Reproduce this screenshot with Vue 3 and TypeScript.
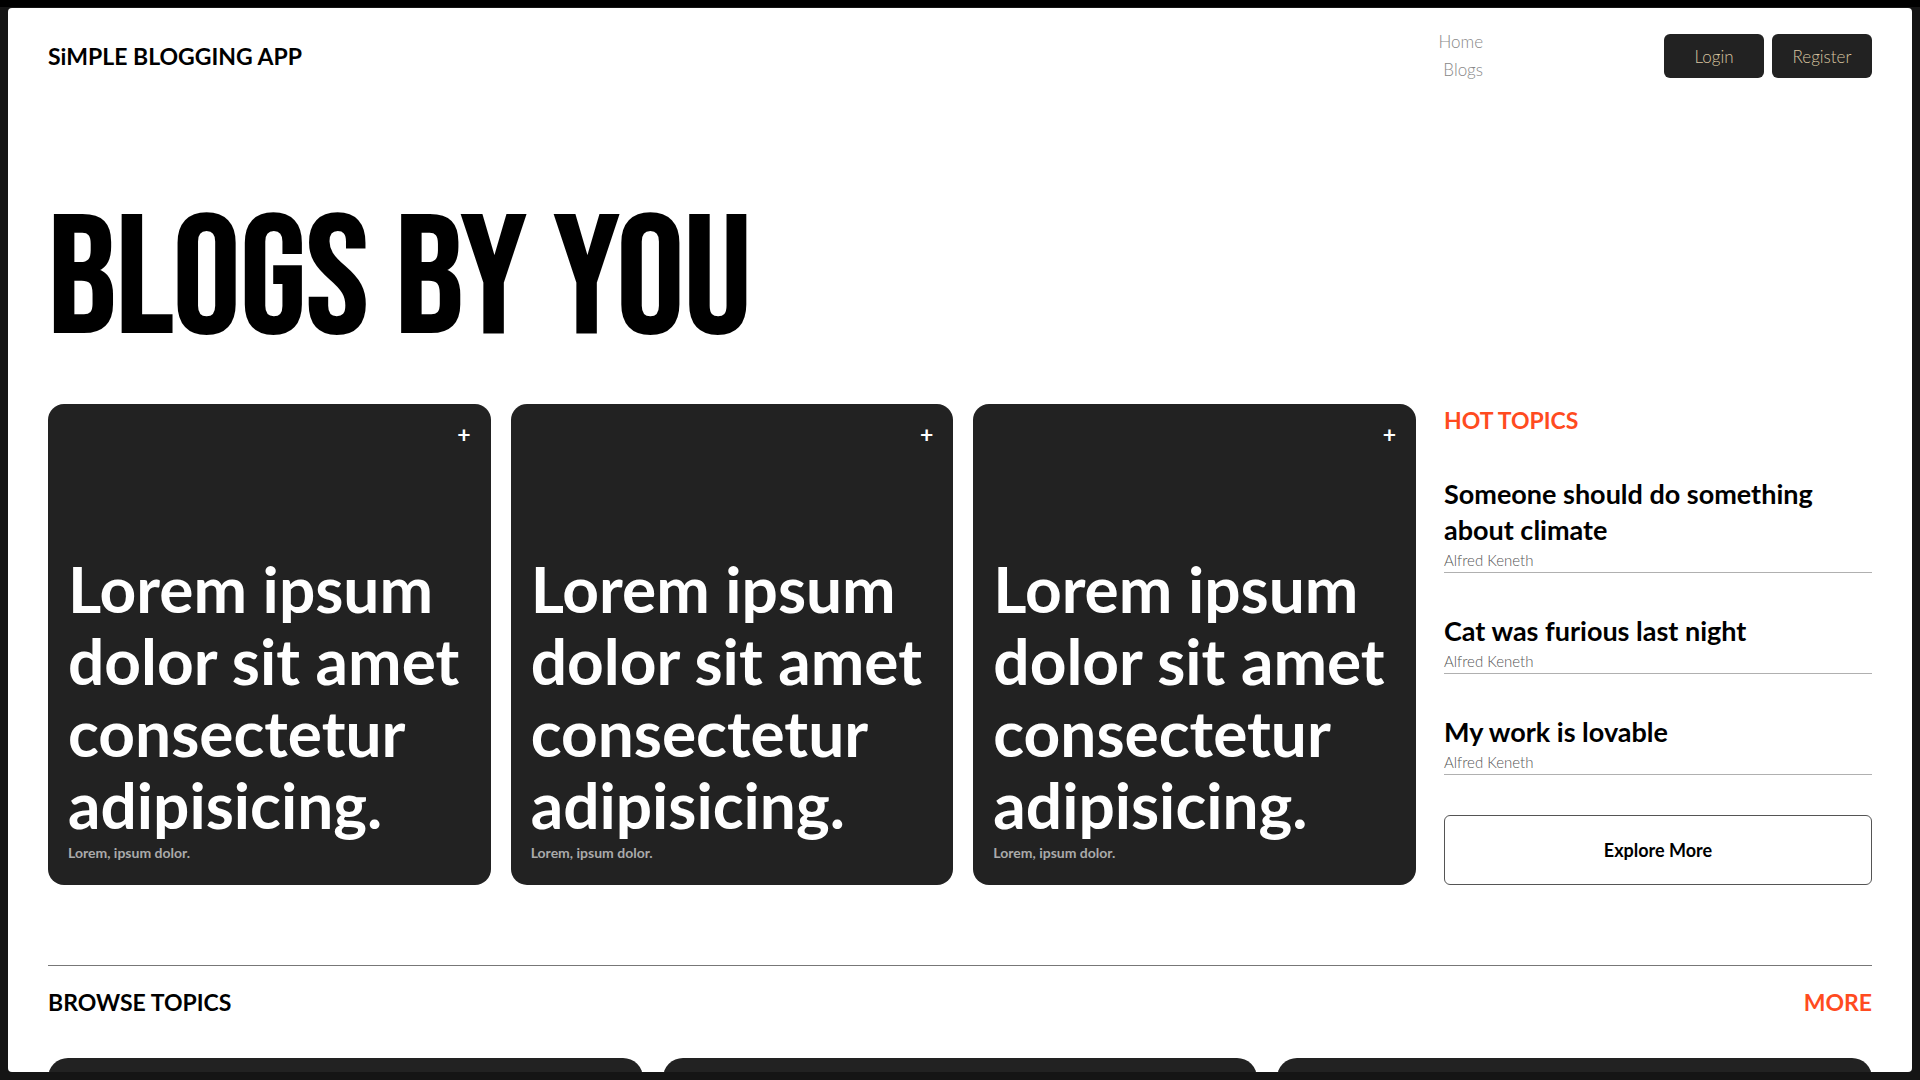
<script setup lang="ts">
interface Post {
  id: number
  title: string
  caption: string
}

interface Topic {
  title: string
  author: string
}

const posts: Post[] = [1, 2, 3].map((id) => ({
  id,
  title: 'Lorem ipsum dolor sit amet consectetur adipisicing.',
  caption: 'Lorem, ipsum dolor.',
}))

const hotTopics: Topic[] = [
  { title: 'Someone should do something about climate', author: 'Alfred Keneth' },
  { title: 'Cat was furious last night', author: 'Alfred Keneth' },
  { title: 'My work is lovable', author: 'Alfred Keneth' },
]
</script>

<template>
  <div class="page">
    <div class="frame">
      <header class="header">
        <a class="brand" href="#">SiMPLE BLOGGING APP</a>
        <nav class="nav">
          <a href="#">Home</a>
          <a href="#">Blogs</a>
        </nav>
        <div class="account">
          <button type="button">Login</button>
          <button type="button">Register</button>
        </div>
      </header>

      <main>
        <h1 class="hero">BLOGS BY YOU</h1>

        <div class="featured">
          <section class="posts">
            <article v-for="post in posts" :key="post.id" class="post">
              <button type="button" class="add">+</button>
              <h2>{{ post.title }}</h2>
              <p>{{ post.caption }}</p>
            </article>
          </section>

          <aside class="hot">
            <h2 class="label accent">HOT TOPICS</h2>
            <article v-for="topic in hotTopics" :key="topic.title" class="topic">
              <h3>{{ topic.title }}</h3>
              <p>{{ topic.author }}</p>
            </article>
            <button type="button" class="explore">Explore More</button>
          </aside>
        </div>

        <section class="browse">
          <div class="browse-head">
            <h2 class="label">BROWSE TOPICS</h2>
            <a class="label accent" href="#">MORE</a>
          </div>
          <div class="browse-grid">
            <div v-for="n in 3" :key="n" class="tile"></div>
          </div>
        </section>
      </main>
    </div>
  </div>
</template>

<style>
body {
  margin: 0;
  background: #151515;
}
</style>

<style scoped>
* {
  box-sizing: border-box;
}

h1,
h2,
h3,
p {
  margin: 0;
}

a {
  color: inherit;
  text-decoration: none;
}

button {
  margin: 0;
  padding: 0;
  border: 0;
  font-family: inherit;
  cursor: pointer;
}

.page {
  height: 100vh;
  padding: 1px 8px 8px;
  border-top: 7px solid #000;
}

.frame {
  height: 100%;
  padding: 20px 40px;
  overflow-y: auto;
  scrollbar-width: none;
  border-radius: 4px;
  background: #fff;
  color: #000;
  font-family: Lato, "Open Sans", sans-serif;
}

.header {
  display: flex;
  align-items: center;
}

.brand {
  flex: 1;
  font-size: 23px;
  line-height: 32px;
  font-weight: 700;
}

.nav {
  display: flex;
  flex-direction: column;
  align-items: flex-end;
  margin-right: 181px;
  color: #888;
  font-size: 17px;
  line-height: 28px;
  font-weight: 300;
}

.account {
  display: flex;
  gap: 8px;
}

.account button {
  width: 100px;
  height: 44px;
  border-radius: 6px;
  background: #222;
  color: #d8c4a0;
  font-size: 17px;
  font-weight: 300;
}

.hero {
  margin: 118px 0 42px;
  font-family: "Bebas Neue", "Liberation Sans Narrow", sans-serif;
  font-size: 168px;
  line-height: 160px;
  font-weight: 400;
  -webkit-text-stroke: 2px #000;
}

.featured {
  display: flex;
}

.posts {
  display: grid;
  grid-template-columns: repeat(3, 1fr);
  gap: 20px;
  width: 75%;
}

.post {
  display: flex;
  flex-direction: column;
  padding: 20px;
  border-radius: 16px;
  background: #222;
  color: #fff;
}

.add {
  align-self: flex-end;
  margin-bottom: auto;
  background: none;
  color: #fff;
  font-size: 23px;
  line-height: 20px;
  font-weight: 700;
}

.post h2 {
  font-size: 64px;
  line-height: 72px;
  font-weight: 700;
}

.post p {
  color: #aaa;
  font-size: 14px;
  line-height: 24px;
  font-weight: 700;
}

.hot {
  display: flex;
  flex-direction: column;
  gap: 40px;
  width: 25%;
  padding-left: 28px;
}

.label {
  font-size: 23px;
  line-height: 32px;
  font-weight: 700;
}

.accent {
  color: #ff4b1f;
}

.topic {
  padding-bottom: 2px;
  border-bottom: 1px solid #b0b0b0;
}

.topic h3 {
  font-size: 27px;
  line-height: 36px;
  font-weight: 700;
}

.topic p {
  margin-top: 2px;
  color: #555;
  font-size: 15px;
  line-height: 20px;
  font-weight: 300;
}

.explore {
  height: 70px;
  border: 1px solid #555;
  border-radius: 6px;
  background: #fff;
  color: #000;
  font-size: 18px;
  font-weight: 700;
}

.browse {
  margin-top: 80px;
  padding-top: 20px;
  border-top: 1px solid #777;
}

.browse-head {
  display: flex;
  justify-content: space-between;
}

.browse-grid {
  display: grid;
  grid-template-columns: repeat(3, 1fr);
  gap: 20px;
  margin-top: 40px;
}

.tile {
  height: 320px;
  border-radius: 20px;
  background: #222;
}
</style>
